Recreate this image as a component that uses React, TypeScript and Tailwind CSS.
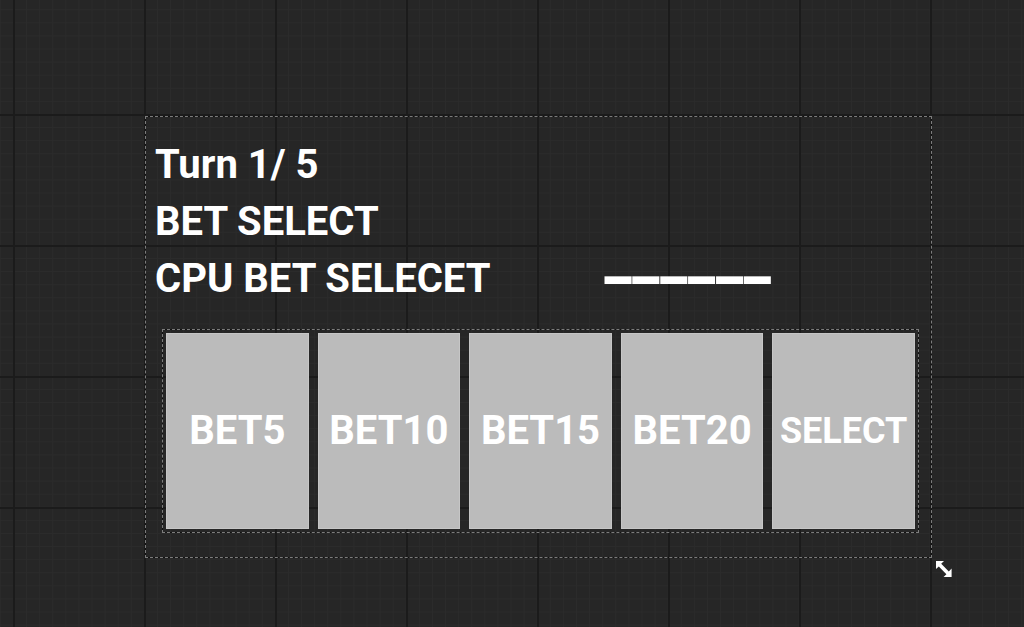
const bets = ['BET5', 'BET10', 'BET15', 'BET20'];

function ResizeArrow() {
  return (
    <svg width="24" height="24" viewBox="0 0 24 24" className="text-white">
      <path d="M3 3h8l-2.8 2.8 7.6 7.6 2.8-2.8V19h-8l2.8-2.8-7.6-7.6L3 11z" fill="currentColor" />
    </svg>
  );
}

export default function App() {
  return (
    <div className="relative w-[1024px] h-[627px] overflow-hidden bg-[#262626] bg-[linear-gradient(to_right,#1b1b1b_2px,transparent_2px),linear-gradient(to_bottom,#1b1b1b_2px,transparent_2px),linear-gradient(to_right,#2b2b2b_1px,transparent_1px),linear-gradient(to_bottom,#2b2b2b_1px,transparent_1px)] bg-size-[131px_131px,131px_131px,13.1px_13.1px,13.1px_13.1px] bg-position-[13px_114px,13px_114px,13px_114px,13px_114px] font-['Roboto','Liberation_Sans',sans-serif]">
      {/* widget being edited */}
      <div className="absolute left-[145px] top-[116px] w-[787px] h-[442px] border border-[#111]">
        <div className="pointer-events-none absolute inset-[-1px] border border-dashed border-[#7c7c7c]" />
        <div className="flex flex-col pl-[9px] pt-[19px] text-white font-bold text-[40px] leading-[57px]">
          <div>Turn 1/ 5</div>
          <div>BET SELECT</div>
          <div className="flex items-baseline">
            <span>CPU BET SELECET</span>
            <span className="inline-block ml-[112px] tracking-[-2.6px] scale-y-[1.7] origin-[50%_68%] translate-y-[10px]">——————</span>
          </div>
        </div>

        <div className="relative ml-[16px] mt-[22px] w-[757px] h-[204px] border border-[#111] p-[3px] flex gap-[9px]">
          <div className="pointer-events-none absolute inset-[-1px] border border-dashed border-[#7c7c7c]" />
          {bets.map((b) => (
            <div key={b} className="flex-1 flex items-center justify-center bg-[#bbbbbb] border border-[#c6c6c6] text-white font-bold text-[40px]">
              {b}
            </div>
          ))}
          <div className="flex-1 flex items-center justify-center bg-[#bbbbbb] border border-[#c6c6c6] text-white font-bold text-[36px]">
            SELECT
          </div>
        </div>
      </div>

      <div className="absolute left-[933px] top-[558px]">
        <ResizeArrow />
      </div>
    </div>
  );
}
